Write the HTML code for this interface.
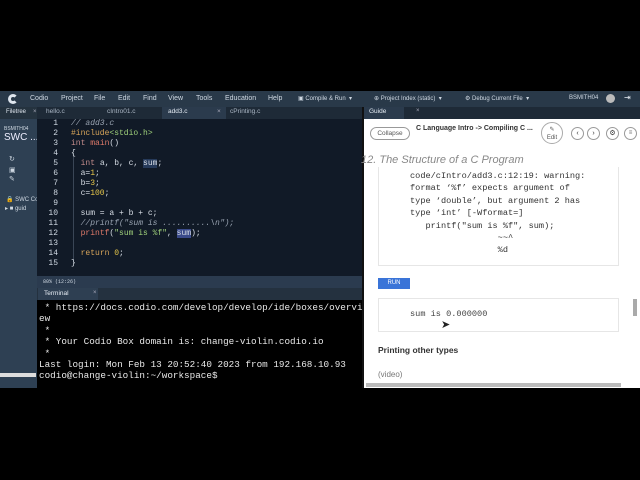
<!DOCTYPE html>
<html><head><style>
*{margin:0;padding:0;box-sizing:border-box}
body{width:640px;height:480px;background:#000;position:relative;overflow:hidden;font-family:"Liberation Sans",sans-serif}
.a{position:absolute;white-space:nowrap}
.m{font-family:"Liberation Mono",monospace}
</style></head><body>
<div class="a" style="left:0;top:91px;width:640px;height:16px;background:#293949"></div>
<div class="a" style="left:8px;top:94px;width:10px;height:10px;border-radius:50%;border:3px solid #dfe6ee;border-right-color:transparent"></div>
<div class="a" style="top:95px;left:30px;font-size:7px;color:#cfd8e2">Codio</div>
<div class="a" style="top:95px;left:61px;font-size:7px;color:#cfd8e2">Project</div>
<div class="a" style="top:95px;left:94px;font-size:7px;color:#cfd8e2">File</div>
<div class="a" style="top:95px;left:118px;font-size:7px;color:#cfd8e2">Edit</div>
<div class="a" style="top:95px;left:143px;font-size:7px;color:#cfd8e2">Find</div>
<div class="a" style="top:95px;left:168px;font-size:7px;color:#cfd8e2">View</div>
<div class="a" style="top:95px;left:196px;font-size:7px;color:#cfd8e2">Tools</div>
<div class="a" style="top:95px;left:225px;font-size:7px;color:#cfd8e2">Education</div>
<div class="a" style="top:95px;left:268px;font-size:7px;color:#cfd8e2">Help</div>
<div class="a" style="top:95px;left:298px;font-size:6px;color:#cfd8e2">▣ Compile &amp; Run &nbsp;▾</div>
<div class="a" style="top:95px;left:374px;font-size:6px;color:#cfd8e2">⊕ Project Index (static) &nbsp;▾</div>
<div class="a" style="top:95px;left:465px;font-size:6px;color:#cfd8e2">⚙ Debug Current File &nbsp;▾</div>
<div class="a" style="top:95px;left:569px;font-size:6px;color:#cfd8e2">BSMITH04</div>
<div class="a" style="top:94px;left:606px;width:9px;height:9px;border-radius:50%;background:#bbb"></div>
<div class="a" style="top:93px;left:624px;font-size:8px;color:#e0e6ee">⇥</div>
<div class="a" style="left:0;top:107px;width:37px;height:281px;background:#2e4053"></div>
<div class="a" style="left:0;top:107px;width:37px;height:12px;background:#25333f"></div>
<div class="a" style="top:109px;left:6px;font-size:6px;color:#dfe6ee">Filetree</div>
<div class="a" style="top:109px;left:33px;font-size:6px;color:#aab">×</div>
<div class="a" style="top:126px;left:4px;font-size:5px;color:#cfd8e2">BSMITH04</div>
<div class="a" style="top:132px;left:4px;font-size:10px;color:#eef">SWC ...</div>
<div class="a" style="top:155px;left:9px;font-size:7px;color:#cfd8e2">↻</div>
<div class="a" style="top:166px;left:9px;font-size:7px;color:#cfd8e2">▣</div>
<div class="a" style="top:175px;left:9px;font-size:7px;color:#cfd8e2">✎</div>
<div class="a" style="top:196px;left:6px;font-size:6px;color:#cfd8e2">🔒 SWC Co</div>
<div class="a" style="top:205px;left:5px;font-size:6px;color:#cfd8e2">▸ ■ guid</div>
<div class="a" style="top:373px;left:0;width:36px;height:4px;background:#ddd"></div>
<div class="a" style="left:37px;top:107px;width:325px;height:169px;background:#111a27"></div>
<div class="a" style="left:37px;top:107px;width:325px;height:12px;background:#1e2a37"></div>
<div class="a" style="left:162px;top:107px;width:64px;height:12px;background:#2b3b4d"></div>
<div class="a" style="top:108px;left:46px;font-size:6.5px;color:#aab6c4">hello.c</div>
<div class="a" style="top:108px;left:107px;font-size:6.5px;color:#aab6c4">cIntro01.c</div>
<div class="a" style="top:108px;left:168px;font-size:6.5px;color:#e6edf5">add3.c</div>
<div class="a" style="top:108px;left:217px;font-size:6.5px;color:#aab">×</div>
<div class="a" style="top:108px;left:230px;font-size:6.5px;color:#aab6c4">cPrinting.c</div>
<div class="a" style="left:73px;top:153px;width:1px;height:110px;background:#3a4656"></div>
<div class="a m" style="left:40px;top:119px;width:18px;font-size:8px;line-height:10px;color:#cfd8e2;text-align:right;white-space:pre">1
2
3
4
5
6
7
8
9
10
11
12
13
14
15</div>
<div class="a m" style="left:71px;top:119px;font-size:8px;line-height:10px;color:#d8dee6;white-space:pre"><i style="color:#9aa4b2">// add3.c</i>
<span style="color:#d8a55a">#include</span><span style="color:#9ecf7a">&lt;stdio.h&gt;</span>
<span style="color:#c08a8a">int</span> <span style="color:#e07a6a">main</span>()
{
  <span style="color:#c08a8a">int</span> a, b, c, <span style="background:#263a5a">sum</span>;
  a=<span style="color:#e8c84a">1</span>;
  b=<span style="color:#e8c84a">3</span>;
  c=<span style="color:#e8c84a">100</span>;

  sum = a + b + c;
  <i style="color:#9aa4b2">//printf("sum is ..........\n");</i>
  <span style="color:#e07a6a">printf</span>(<span style="color:#9ecf7a">"sum is %f"</span>, <span style="background:#3a4a8a">sum</span>);

  <span style="color:#d8a55a">return</span> <span style="color:#e8c84a">0</span>;
}</div>
<div class="a" style="left:37px;top:276px;width:325px;height:12px;background:#2b3b4f"></div>
<div class="a m" style="top:279px;left:43px;font-size:5px;color:#cfd8e2">80% (12:26)</div>
<div class="a" style="left:37px;top:288px;width:325px;height:12px;background:#24313f"></div>
<div class="a" style="left:38px;top:288px;width:60px;height:12px;background:#2e3f52"></div>
<div class="a" style="top:290px;left:44px;font-size:6.5px;color:#e6edf5">Terminal</div>
<div class="a" style="top:290px;left:93px;font-size:6px;color:#aab">×</div>
<div class="a" style="left:37px;top:300px;width:325px;height:88px;background:#000"></div>
<div class="a m" style="left:39px;top:302px;font-size:9.3px;line-height:11.4px;color:#e8e8e8;white-space:pre"> * https://docs.codio.com/develop/develop/ide/boxes/overvi
ew
 *
 * Your Codio Box domain is: change-violin.codio.io
 *
Last login: Mon Feb 13 20:52:40 2023 from 192.168.10.93
codio@change-violin:~/workspace$</div>
<div class="a" style="left:362px;top:107px;width:278px;height:281px;background:#fff;border-left:2px solid #111"></div>
<div class="a" style="left:364px;top:107px;width:276px;height:12px;background:#1e2a37"></div>
<div class="a" style="left:364px;top:107px;width:40px;height:12px;background:#2b3b4d"></div>
<div class="a" style="top:108px;left:369px;font-size:6.5px;color:#e6edf5">Guide</div>
<div class="a" style="top:108px;left:416px;font-size:6px;color:#aab">×</div>
<div class="a" style="left:370px;top:127px;width:40px;height:13px;border:1px solid #999;border-radius:7px;font-size:6.5px;color:#555;text-align:center;line-height:11px">Collapse</div>
<div class="a" style="top:125px;left:416px;font-size:7px;font-weight:bold;color:#333">C Language Intro -&gt; Compiling C ...</div>
<div class="a" style="left:541px;top:122px;width:22px;height:22px;border:1px solid #aaa;border-radius:50%;font-size:6px;color:#555;text-align:center;line-height:8px;padding-top:3px">✎<br>Edit</div>
<div class="a" style="left:571px;top:127px;width:13px;height:13px;border:1px solid #999;border-radius:50%;font-size:7px;text-align:center;line-height:11px;color:#333">‹</div>
<div class="a" style="left:587px;top:127px;width:13px;height:13px;border:1px solid #999;border-radius:50%;font-size:7px;text-align:center;line-height:11px;color:#333">›</div>
<div class="a" style="left:606px;top:127px;width:13px;height:13px;border:1px solid #999;border-radius:50%;font-size:7px;text-align:center;line-height:11px;color:#333">⚙</div>
<div class="a" style="left:624px;top:127px;width:13px;height:13px;border:1px solid #999;border-radius:50%;font-size:6px;text-align:center;line-height:11px;color:#666">≡</div>
<div class="a" style="top:154px;left:361px;font-size:11px;font-style:italic;color:#888">12. The Structure of a C Program</div>
<div class="a" style="left:378px;top:167px;width:241px;height:99px;border:1px solid #e6e6e6;border-top:none"></div>
<div class="a m" style="left:410px;top:170px;font-size:8.6px;line-height:12.4px;color:#333;white-space:pre">code/cIntro/add3.c:12:19: warning:
format ‘%f’ expects argument of
type ‘double’, but argument 2 has
type ‘int’ [-Wformat=]
   printf("sum is %f", sum);
                 ~~^
                 %d</div>
<div class="a" style="left:378px;top:278px;width:32px;height:11px;background:#3a74d8;font-size:6px;color:#fff;text-align:center;line-height:11px">RUN</div>
<div class="a" style="left:378px;top:298px;width:241px;height:34px;border:1px solid #e6e6e6"></div>
<div class="a m" style="left:410px;top:309px;font-size:8.6px;color:#444">sum is 0.000000</div>
<div class="a" style="left:441px;top:318px;font-size:11px;color:#222">➤</div>
<div class="a" style="top:345px;left:378px;font-size:8.5px;font-weight:bold;color:#333">Printing other types</div>
<div class="a" style="top:370px;left:378px;font-size:8px;color:#777">(video)</div>
<div class="a" style="left:633px;top:299px;width:4px;height:17px;background:#aaa"></div>
<div class="a" style="left:366px;top:383px;width:255px;height:4px;background:#bbb"></div>
</body></html>
